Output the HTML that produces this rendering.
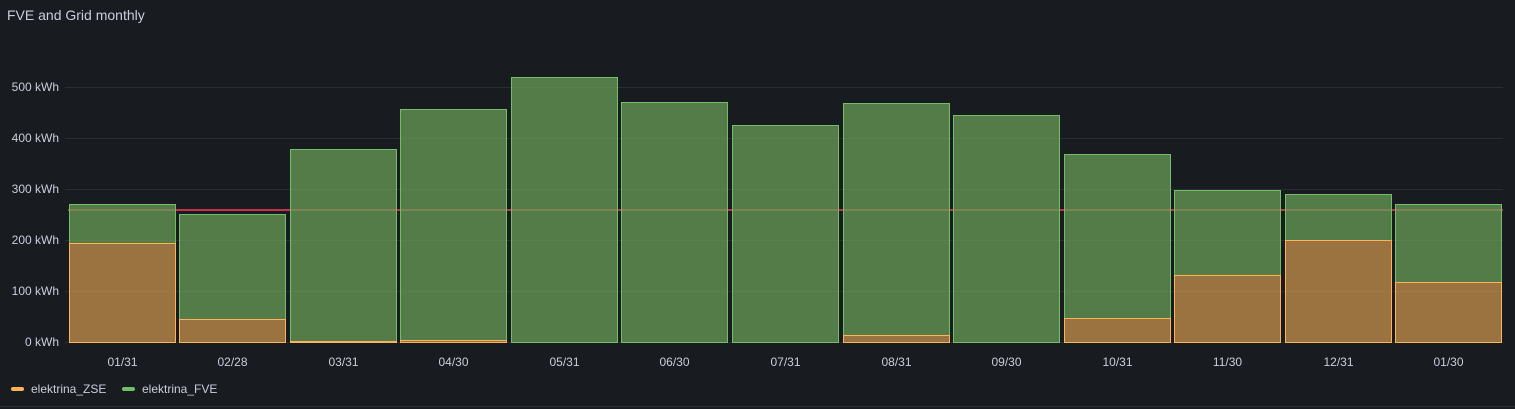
<!DOCTYPE html>
<html><head><meta charset="utf-8"><style>
html,body{margin:0;padding:0;background:#181b1f;}
body{width:1515px;height:409px;overflow:hidden;font-family:"Liberation Sans",sans-serif;}
</style></head><body>
<svg width="1515" height="409" xmlns="http://www.w3.org/2000/svg" style="display:block">
<rect width="1515" height="409" fill="#181b1f"/>
<text x="7" y="20" fill="#ccccdc" font-size="14" font-family="Liberation Sans, sans-serif">FVE and Grid monthly</text>
<g stroke="#2a2d33" stroke-width="1">
<line x1="65" y1="87.5" x2="1503" y2="87.5"/>
<line x1="65" y1="138.5" x2="1503" y2="138.5"/>
<line x1="65" y1="189.5" x2="1503" y2="189.5"/>
<line x1="65" y1="240.5" x2="1503" y2="240.5"/>
<line x1="65" y1="291.5" x2="1503" y2="291.5"/>
<line x1="65" y1="342.5" x2="1503" y2="342.5"/>
</g>
<g fill="#ccccdc" font-size="12" text-anchor="end" font-family="Liberation Sans, sans-serif">
<text x="59" y="91">500 kWh</text>
<text x="59" y="142">400 kWh</text>
<text x="59" y="193">300 kWh</text>
<text x="59" y="244">200 kWh</text>
<text x="59" y="295">100 kWh</text>
<text x="59" y="346">0 kWh</text>
</g>
<line x1="68" y1="210" x2="1503" y2="210" stroke="#c4314b" stroke-width="2"/>
<g id="bars"></g>
<g fill="#ccccdc" font-size="12" text-anchor="middle" id="xl" font-family="Liberation Sans, sans-serif"></g>
<rect x="11" y="387" width="13" height="4" rx="2" fill="#ffb357"/>
<text x="31" y="393" fill="#ccccdc" font-size="12" font-family="Liberation Sans, sans-serif">elektrina_ZSE</text>
<rect x="122" y="387" width="13" height="4" rx="2" fill="#73bf69"/>
<text x="142" y="393" fill="#ccccdc" font-size="12" font-family="Liberation Sans, sans-serif">elektrina_FVE</text>
<line x1="0" y1="406.5" x2="1515" y2="406.5" stroke="#2c2f35"/>
</svg>
<script>
var f=[204,214,149,109,77,102,125,103,115,154,190,194,204];
var z=[243,319,341,340,0,342,342,335,342,318,275,240,282];
var l=["01/31","02/28","03/31","04/30","05/31","06/30","07/31","08/31","09/30","10/31","11/30","12/31","01/30"];
var ns="http://www.w3.org/2000/svg",g=document.getElementById("bars"),xl=document.getElementById("xl");
function r(x,y,w,h,fill,st){var e=document.createElementNS(ns,"rect");e.setAttribute("x",x);e.setAttribute("y",y);e.setAttribute("width",w);e.setAttribute("height",h);e.setAttribute("fill",fill);e.setAttribute("stroke",st);e.setAttribute("stroke-width","1");g.appendChild(e);}
for(var i=0;i<13;i++){var x=Math.floor(69+i*110.58)+0.5;
var zb=z[i]?z[i]:342;
r(x,f[i]+0.5,106,zb-f[i],"rgba(104,158,88,0.75)","#73bf69");
if(z[i])r(x,z[i]+0.5,106,342-z[i],"rgba(199,146,78,0.75)","#ffb357");
var t=document.createElementNS(ns,"text");t.setAttribute("x",x+53);t.setAttribute("y",366);t.textContent=l[i];xl.appendChild(t);}
</script>
</body></html>
